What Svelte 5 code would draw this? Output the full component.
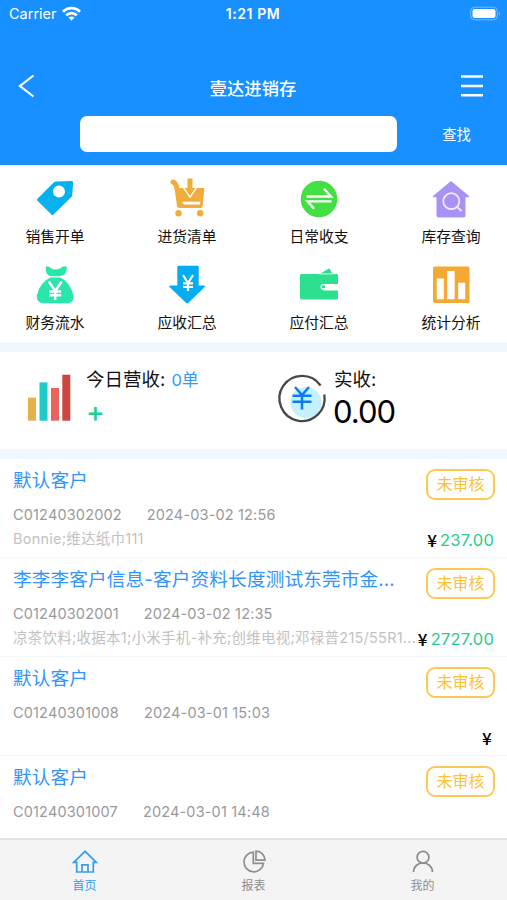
<script lang="ts">
  interface Order {
    customer: string;
    code: string;
    date: string;
    goods?: string;
    amount?: string;
    /** Row still shows the currency sign when the amount is empty */
    priced?: boolean;
  }

  const menu = [
    { icon: 'tag', label: '销售开单' },
    { icon: 'cart', label: '进货清单' },
    { icon: 'swap', label: '日常收支' },
    { icon: 'stock', label: '库存查询' },
    { icon: 'bag', label: '财务流水' },
    { icon: 'receive', label: '应收汇总' },
    { icon: 'wallet', label: '应付汇总' },
    { icon: 'stats', label: '统计分析' },
  ];

  const orders: Order[] = [
    {
      customer: '默认客户',
      code: 'C01240302002',
      date: '2024-03-02 12:56',
      goods: 'Bonnie;维达纸巾111',
      amount: '237.00',
      priced: true,
    },
    {
      customer: '李李李客户信息-客户资料长度测试东莞市金...',
      code: 'C01240302001',
      date: '2024-03-02 12:35',
      goods: '凉茶饮料;收据本1;小米手机-补充;创维电视;邓禄普215/55R1...',
      amount: '2727.00',
      priced: true,
    },
    { customer: '默认客户', code: 'C01240301008', date: '2024-03-01 15:03', priced: true },
    { customer: '默认客户', code: 'C01240301007', date: '2024-03-01 14:48' },
  ];

  const tabs = [
    { icon: 'home', label: '首页' },
    { icon: 'report', label: '报表' },
    { icon: 'user', label: '我的' },
  ];

  let active = $state('home');
  let keyword = $state('');
</script>

<div class="app">
  <header class="header">
    <div class="status">
      <div class="status__carrier">
        <span>Carrier</span>
        <svg width="19" height="14" viewBox="0 0 19 14" fill="none" stroke="#fff" stroke-width="2.8">
          <path d="M1 4.800C5.800 0 13.200 0 18 4.800" />
          <path d="M4.200 8.300C7.200 5.400 11.800 5.400 14.800 8.300" />
          <path d="M6.500 10.600Q9.500 8.200 12.500 10.600L9.500 13.800Z" fill="#fff" stroke="none" />
        </svg>
      </div>
      <span class="status__time">1:21 PM</span>
      <svg class="status__battery" width="31" height="14" viewBox="0 0 31 14">
        <rect x="0.700" y="0.200" width="26.600" height="12.600" rx="4" fill="none" stroke="#fff" stroke-opacity=".4" />
        <rect x="2.500" y="2" width="23" height="9" rx="2.200" fill="#fff" />
        <path d="M28.800 4.500v4q2-2 0-4" fill="#fff" fill-opacity=".5" />
      </svg>
    </div>

    <div class="nav">
      <svg width="18" height="24" viewBox="0 0 18 24" fill="none" stroke="#fff" stroke-width="2.200">
        <path d="M15.500 1.500 2 12l13.500 10.500" />
      </svg>
      <h1 class="nav__title">壹达进销存</h1>
      <svg width="22" height="24" viewBox="0 0 22 24" fill="none" stroke="#fff" stroke-width="2.400">
        <path d="M0 2.500h22M0 12h22M0 21.300h22" />
      </svg>
    </div>

    <div class="search">
      <input class="search__input" type="text" aria-label="查找" bind:value={keyword} />
      <button class="search__button" type="button">查找</button>
    </div>
  </header>

  <section class="menu">
    {#each menu as item (item.label)}
      <div class="menu__item">
        <svg width="38" height="38" viewBox="0 0 38 38">
          {#if item.icon === 'tag'}
            <path fill="#06b1ee" fill-rule="evenodd" d="M1.500 18.700 18 2.300q.8-.7 2-.8l16-.5q1.200 0 1.200 1.200l-1 13q0 1-.8 1.800L17.500 34.500q-1 1-2 0L1.500 20.700q-1-1 0-2ZM23 5.500a6 6 0 1 0 0 12 6 6 0 0 0 0-12Z" />
          {:else if item.icon === 'cart'}
            <g fill="#f0ad3b">
              <circle cx="5" cy="2" r="2.500" />
              <path d="M5 2Q8.500 3.500 9 9" fill="none" stroke="#f0ad3b" stroke-width="5" />
              <path d="M6.500 8h28.800q1.200 0 1 1.200L34.700 26q-.2 2-1.800 2H11.500q-2.300 0-2.500-2Z" />
              <circle cx="10.500" cy="33.300" r="3.200" />
              <circle cx="32.200" cy="33.300" r="3.200" />
              <path d="M14.500 7.500H17l5 8.500 5-8.500h2.500L22 18.200Z" fill="#fff" />
              <path d="M19.500-1.500h5V8h3L22 15.500 16.500 8h3Z" />
              <path d="M14.500 21.800h17.800l-.4 2.800H17q-2.200 0-2.500-2.800Z" fill="#fff" />
            </g>
          {:else if item.icon === 'swap'}
            <circle cx="19" cy="19" r="18.300" fill="#43df43" />
            <g fill="none" stroke="#fff" stroke-width="2.300">
              <path d="M6.500 16.500H31L24 8.800M31.500 21.300H7.500l6.500 7.500" />
            </g>
          {:else if item.icon === 'stock'}
            <path fill="#a893f5" d="M19 1 37 16q1 1.200-.5 1.200H33.500V35.500q0 2-2 2H6.500q-2 0-2-2V17.200h-3Q0 17.200 1 16Z" />
            <g fill="none" stroke="#f4ebff" stroke-width="1.700">
              <circle cx="19.300" cy="21.200" r="8" />
              <path d="m24.500 26.500 5 4.500" />
            </g>
          {:else if item.icon === 'bag'}
            <g fill="#2be6aa">
              <path d="M10.500.3q2.500 0 5 2.300 4 2 8.500 0 2-2.300 5.500-2.300 2 .5 1 4.200-1 5-7 5.700h-8.500Q10 9.500 9.700 3 9.500.5 10.500.3Z" />
              <path d="M14.500 11.500h10Q34 16 37.500 29.500q.8 7.500-6 7.800H8.500Q0 37 .8 29.500 4 16 14.500 11.500Z" />
            </g>
            <path d="m12.800 15.500 6.400 9.500 6.400-9.500M13.200 25.500h12M13.200 29.300h12M19.200 25v9" fill="none" stroke="#fff" stroke-width="2.500" />
          {:else if item.icon === 'receive'}
            <path fill="#05adf0" d="M10.500-.3h19q1.200 0 1.200 1.200V19.500h5.500q1.700.2.500 1.600L20.200 37q-1 .8-2 0L1.600 21.100Q.5 19.700 2 19.500h7.300V.900Q9.300-.3 10.500-.3Z" />
            <path d="m15 9 5 8 5-8M15 17.300h10M15 21h10M20 17v8" fill="none" stroke="#fff" stroke-width="2.200" />
          {:else if item.icon === 'wallet'}
            <path fill="#2ce08f" d="M1.500 8h18L28.500 2.700q1-.5 1.500.5L32.500 8h4.200q1.300 0 1.300 1.300v9H25.500a3 3 0 0 0 0 6.200H38v7.500q0 1.500-1.500 1.500h-35Q0 33.500 0 31.500V9.500Q0 8 1.500 8Z" />
            <path d="M19 7.900h14" stroke="#fff" stroke-width=".9" />
            <path fill="#fff" d="M23.500 18H38v5.500H23.500Q20.500 23.500 20.500 20.700T23.500 18Z" />
            <circle cx="23.500" cy="20.700" r="1.600" fill="#2ce08f" />
          {:else}
            <rect x="1" y="0.500" width="36.500" height="36.500" rx="1.500" fill="#f3a934" />
            <path fill="#fff" d="M4.800 12.500h7v20.700h-7ZM15.200 5h7.500v28.200h-7.500ZM26.200 16.800h7v16.400h-7Z" />
          {/if}
        </svg>
        <span class="menu__label">{item.label}</span>
      </div>
    {/each}
  </section>

  <section class="summary">
    <div class="summary__card">
      <svg width="44" height="48" viewBox="0 0 44 48">
        <path fill="#e6b04c" d="M0 23.700h8v23H0Z" />
        <path fill="#20cac6" d="M11.500 8.400h8v38.300h-8Z" />
        <path fill="#e96460" d="M23 14h8v32.700h-8Z" />
        <path fill="#cd4540" d="M34.300.7h8v46h-8Z" />
      </svg>
      <div class="summary__body">
        <div class="summary__label">今日营收: <span class="summary__count">0单</span></div>
        <div class="summary__plus">+</div>
      </div>
    </div>
    <div class="summary__card">
      <svg width="48" height="48" viewBox="0 0 48 48" fill="none">
        <circle cx="28" cy="28.500" r="15.500" fill="#c4f0ff" />
        <path d="M42.600 11.500A22.600 22.600 0 1 0 46.300 20.500" stroke="#484848" stroke-width="2.300" />
        <path d="m17 13 7 8 7-8M14.500 21.800h19M14.500 27.800h19M24 21v14.500" stroke="#0b7df2" stroke-width="2.500" />
      </svg>
      <div class="summary__body">
        <div class="summary__label">实收:</div>
        <div class="summary__total">0.00</div>
      </div>
    </div>
  </section>

  <main class="orders">
    {#each orders as order (order.code)}
      <article class="order">
        <div class="order__top">
          <h2 class="order__customer">{order.customer}</h2>
          <span class="order__state">未审核</span>
        </div>
        <div class="order__meta">
          <span class="order__code">{order.code}</span>
          <span>{order.date}</span>
        </div>
        <div class="order__bottom">
          <span class="order__goods">{order.goods ?? ''}</span>
          {#if order.priced}
            <span class="order__price">
              <span class="order__yen">¥</span>
              {#if order.amount}
                <span class="order__amount">{order.amount}</span>
              {/if}
            </span>
          {/if}
        </div>
      </article>
    {/each}
  </main>

  <nav class="tabs">
    {#each tabs as tab (tab.icon)}
      <button
        type="button"
        class="tab"
        class:tab--active={active === tab.icon}
        onclick={() => (active = tab.icon)}
      >
        <svg width="26" height="24" viewBox="0 0 26 24" fill="none" stroke="currentColor" stroke-width="1.700">
          {#if tab.icon === 'home'}
            <path d="M13 1.300 1.700 12.300h3V22h16.600v-9.700h3ZM10 22v-7.200h6V22" />
          {:else if tab.icon === 'report'}
            <path d="M12.300 2.200A9.800 9.800 0 1 0 22.500 13.300H12.300Z" />
            <path d="M15 1.200v9h9A9 9 0 0 0 15 1.200Z" />
          {:else}
            <circle cx="13" cy="7.300" r="5.900" />
            <path d="M3.500 22C4 10 22 10 22.500 22" />
          {/if}
        </svg>
        <span>{tab.label}</span>
      </button>
    {/each}
  </nav>
</div>

<style>
  :global(body) {
    background: #fff;
  }

  .app {
    display: flex;
    flex-direction: column;
    height: 900px;
    overflow: hidden;
    font-family: Inter, 'Noto Sans CJK SC', sans-serif;
    color: #111;
  }

  svg {
    display: block;
    flex: none;
    overflow: visible;
  }

  /* Header */
  .header {
    flex: none;
    box-sizing: border-box;
    height: 165px;
    background: #1990ff;
    color: #fff;
  }

  .status {
    display: grid;
    grid-template-columns: 1fr auto 1fr;
    align-items: center;
    height: 27px;
    padding: 0 6px 0 9px;
    font-size: 14px;
  }

  .status__carrier {
    display: flex;
    align-items: center;
    gap: 5px;
    font-size: 14.5px;
  }

  .status__time {
    margin-right: 4px;
    font-size: 14px;
    font-weight: 600;
    letter-spacing: 0.6px;
  }

  .status__battery {
    justify-self: end;
  }

  .nav {
    display: flex;
    align-items: center;
    justify-content: space-between;
    height: 24px;
    padding: 0 24px 0 18px;
    margin-top: 47px;
  }

  .nav__title {
    margin: 5px 0 0 9px;
    font-size: 17.3px;
    font-weight: 500;
    line-height: 24px;
  }

  .search {
    display: flex;
    align-items: center;
    padding-left: 80px;
    margin-top: 18px;
  }

  .search__input {
    box-sizing: border-box;
    width: 317px;
    height: 36px;
    padding: 0 12px;
    font: inherit;
    background: #fff;
    border: none;
    border-radius: 7px;
  }

  .search__button {
    flex: 1;
    padding: 0 0 1px 9px;
    font: inherit;
    font-size: 14.3px;
    color: #fff;
    background: none;
    border: none;
  }

  /* Menu */
  .menu {
    flex: none;
    display: grid;
    grid-template-columns: repeat(4, 60px);
    justify-content: space-between;
    grid-auto-rows: 85.5px;
    box-sizing: border-box;
    height: 177px;
    padding: 15px 26px 0 25px;
  }

  .menu__item {
    display: flex;
    flex-direction: column;
    align-items: center;
  }

  .menu__label {
    margin-top: 9px;
    font-size: 14.8px;
    line-height: 20px;
    white-space: nowrap;
  }

  /* Summary */
  .summary {
    flex: none;
    display: grid;
    grid-template-columns: 250px 1fr;
    box-sizing: border-box;
    height: 117px;
    border-top: 10px solid #eff8fe;
    border-bottom: 10px solid #eff8fe;
  }

  .summary__card {
    display: flex;
    gap: 14px;
    padding: 22px 0 0 28px;
  }

  .summary__card + .summary__card {
    gap: 8px;
  }

  .summary__body {
    margin-top: -7px;
  }

  .summary__label {
    font-size: 18.5px;
    line-height: 24px;
    white-space: nowrap;
  }

  .summary__count {
    margin-left: 1px;
    font-size: 16.5px;
    color: #3399ff;
  }

  .summary__plus {
    margin-top: 7px;
    font-size: 28px;
    font-weight: 500;
    line-height: 26px;
    color: #18d291;
  }

  .summary__total {
    margin-top: 3px;
    font-size: 31px;
    line-height: 36px;
    letter-spacing: -1px;
    margin-left: -1px;
    color: #000;
  }

  /* Orders */
  .orders {
    flex: 1;
    min-height: 0;
    overflow: hidden;
  }

  .order {
    box-sizing: border-box;
    height: 99px;
    padding: 9px 12px 0 13px;
    border-bottom: 1px solid #f4f7f9;
  }

  .order__top {
    display: flex;
    justify-content: space-between;
    height: 36px;
  }

  .order__customer {
    margin: 0;
    font-size: 18.6px;
    font-weight: 400;
    line-height: 25px;
    letter-spacing: 0.17px;
    color: #3094fb;
    white-space: nowrap;
  }

  .order__state {
    box-sizing: border-box;
    width: 69px;
    height: 31px;
    margin-top: 1px;
    font-size: 16px;
    line-height: 27px;
    text-align: center;
    color: #fdc237;
    border: 2px solid #fdc955;
    border-radius: 9px;
  }

  .order__meta {
    display: flex;
    gap: 25px;
    height: 22px;
    font-size: 14.5px;
    line-height: 22px;
    letter-spacing: 0.16px;
    color: #999;
  }

  .order__bottom {
    display: flex;
    justify-content: space-between;
    height: 26px;
    line-height: 26px;
    white-space: nowrap;
  }

  .order__goods {
    flex: 1;
    min-width: 0;
    font-size: 14.5px;
    letter-spacing: 0.24px;
    color: #c2c2c2;
  }

  .order__price {
    display: flex;
    gap: 3px;
    margin: 1px 1px 0 0;
    font-size: 16.5px;
    letter-spacing: 0.2px;
  }

  .order__yen {
    font-family: 'Noto Sans CJK SC', sans-serif;
    font-size: 17px;
    font-weight: 500;
    color: #000;
  }

  .order__yen:last-child {
    margin-right: 2px;
  }

  .order__amount {
    color: #2acb8c;
  }

  /* Tab bar */
  .tabs {
    flex: none;
    display: flex;
    box-sizing: border-box;
    height: 62px;
    background: #f4f4f4;
    border-top: 2px solid #e2e2e2;
  }

  .tab {
    flex: 1;
    display: flex;
    flex-direction: column;
    align-items: center;
    gap: 3px;
    padding: 10px 0 0;
    font: inherit;
    font-size: 12px;
    line-height: 17px;
    color: #8e8e8e;
    background: none;
    border: none;
  }

  .tab--active {
    color: #359cf0;
  }
</style>
